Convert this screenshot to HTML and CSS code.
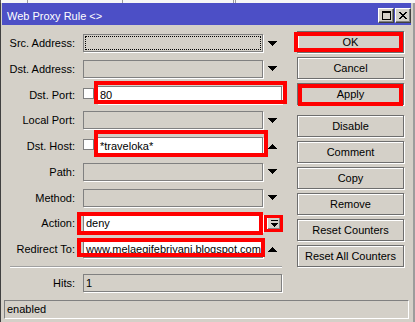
FILE: index.html
```html
<!DOCTYPE html>
<html lang="en">
<head>
  <meta charset="UTF-8" />
  <meta name="viewport" content="width=device-width, initial-scale=1" />
  <title>Web Proxy Rule</title>
  <link rel="stylesheet" href="styles.css">
</head>
<body>
  <div class="backdrop"></div>
  <div class="window">
    <header class="titlebar">
      <span class="title">Web Proxy Rule &lt;&gt;</span>
      <div class="title-buttons">
        <button class="tbtn" type="button" aria-label="Maximize">
          <svg width="9" height="9" viewBox="0 0 9 9"><path d="M0 0h9v2H0z M0 2h1v7H0z M8 2h1v7H8z M0 8h9v1H0z"/></svg>
        </button>
        <button class="tbtn" type="button" aria-label="Close">
          <svg width="8" height="7" viewBox="0 0 8 7"><path d="M0 0h2v1H0z M6 0h2v1H6z M1 1h2v1H1z M5 1h2v1H5z M2 2h4v1H2z M3 3h2v1H3z M2 4h4v1H2z M1 5h2v1H1z M5 5h2v1H5z M0 6h2v1H0z M6 6h2v1H6z"/></svg>
        </button>
      </div>
    </header>

    <div class="content">
      <div class="form">
        <div class="row">
          <span class="label">Src. Address:</span>
          <div class="field focus"></div>
          <span class="arrow"><svg width="9" height="5" viewBox="0 0 9 5"><path d="M0 0h9v1H0z M1 1h7v1H1z M2 2h5v1H2z M3 3h3v1H3z M4 4h1v1H4z"/></svg></span>
        </div>
        <div class="row">
          <span class="label">Dst. Address:</span>
          <div class="field"></div>
          <span class="arrow"><svg width="9" height="5" viewBox="0 0 9 5"><path d="M0 0h9v1H0z M1 1h7v1H1z M2 2h5v1H2z M3 3h3v1H3z M4 4h1v1H4z"/></svg></span>
        </div>
        <div class="row">
          <span class="label">Dst. Port:</span>
          <span class="check"></span>
          <div class="field field-white field-port mark mark-port">80</div>
        </div>
        <div class="row">
          <span class="label">Local Port:</span>
          <div class="field"></div>
          <span class="arrow"><svg width="9" height="5" viewBox="0 0 9 5"><path d="M0 0h9v1H0z M1 1h7v1H1z M2 2h5v1H2z M3 3h3v1H3z M4 4h1v1H4z"/></svg></span>
        </div>
        <div class="row">
          <span class="label">Dst. Host:</span>
          <span class="check"></span>
          <div class="field field-white field-host mark mark-host">*traveloka*</div>
          <span class="arrow"><svg width="9" height="5" viewBox="0 0 9 5"><path d="M4 0h1v1H4z M3 1h3v1H3z M2 2h5v1H2z M1 3h7v1H1z M0 4h9v1H0z"/></svg></span>
        </div>
        <div class="row">
          <span class="label">Path:</span>
          <div class="field"></div>
          <span class="arrow"><svg width="9" height="5" viewBox="0 0 9 5"><path d="M0 0h9v1H0z M1 1h7v1H1z M2 2h5v1H2z M3 3h3v1H3z M4 4h1v1H4z"/></svg></span>
        </div>
        <div class="row">
          <span class="label">Method:</span>
          <div class="field"></div>
          <span class="arrow"><svg width="9" height="5" viewBox="0 0 9 5"><path d="M0 0h9v1H0z M1 1h7v1H1z M2 2h5v1H2z M3 3h3v1H3z M4 4h1v1H4z"/></svg></span>
        </div>
        <div class="row">
          <span class="label">Action:</span>
          <div class="field field-white mark mark-action">deny</div>
          <button class="abtn mark mark-abtn" type="button" aria-label="Choose">
            <svg width="7" height="7" viewBox="0 0 7 7"><path d="M0 0h7v1H0z M0 3h7v1H0z M1 4h5v1H1z M2 5h3v1H2z M3 6h1v1H3z"/></svg>
          </button>
        </div>
        <div class="row">
          <span class="label">Redirect To:</span>
          <div class="field field-white mark mark-redirect">www.melaegifebriyani.blogspot.com</div>
          <span class="arrow"><svg width="9" height="5" viewBox="0 0 9 5"><path d="M4 0h1v1H4z M3 1h3v1H3z M2 2h5v1H2z M1 3h7v1H1z M0 4h9v1H0z"/></svg></span>
        </div>
        <div class="sep"></div>
        <div class="row">
          <span class="label">Hits:</span>
          <div class="field field-wide">1</div>
        </div>
      </div>

      <div class="buttons">
        <button class="btn mark mark-ok" type="button">OK</button>
        <button class="btn" type="button">Cancel</button>
        <button class="btn mark mark-apply" type="button">Apply</button>
        <button class="btn btn-gap" type="button">Disable</button>
        <button class="btn" type="button">Comment</button>
        <button class="btn" type="button">Copy</button>
        <button class="btn" type="button">Remove</button>
        <button class="btn" type="button">Reset Counters</button>
        <button class="btn" type="button">Reset All Counters</button>
      </div>
    </div>

    <div class="status">enabled</div>
  </div>
</body>
</html>
```

FILE: styles.css
```css
* {
  box-sizing: border-box;
}

body {
  margin: 0;
  width: 415px;
  height: 322px;
  overflow: hidden;
  background: #d4d0c8;
  font-family: "Liberation Sans", Arial, sans-serif;
  font-size: 11px;
  color: #000;
}

/* window behind the dialog */
.backdrop {
  height: 3px;
  background-color: #f6f6f6;
  background-image: linear-gradient(to right,
    #555 0 1px, transparent 1px 27px,
    #9a9a9a 27px 28px, transparent 28px 122px,
    #9a9a9a 122px 123px, transparent 123px 233px,
    #9a9a9a 233px 234px, transparent 234px 235px,
    #9a9a9a 235px 236px, transparent 236px);
}

.window {
  height: 319px;
  border-left: 1px solid #404040;
  border-right: 2px solid #9c9c9c;
  display: flex;
  flex-direction: column;
}

.titlebar {
  height: 22px;
  margin: 0 2px 0 1px;
  padding: 0 0 0 5px;
  background: #4c4fc6;
  color: #fff;
  display: flex;
  justify-content: space-between;
  align-items: flex-start;
}

.title {
  margin-top: 7px;
  line-height: 13px;
}

.title-buttons {
  display: flex;
  gap: 1px;
  margin-top: 5px;
}

.tbtn {
  width: 16px;
  height: 15px;
  padding: 0;
  display: flex;
  align-items: center;
  justify-content: center;
  background: #d4d0c8;
  border: 1px solid;
  border-color: #fff #404040 #404040 #fff;
  box-shadow: inset -1px -1px #808080;
}

.tbtn svg,
.arrow svg,
.abtn svg {
  display: block;
}

.content {
  height: 275px;
  display: flex;
}

.form {
  width: 282px;
  padding-top: 9px;
  display: flex;
  flex-direction: column;
  gap: 7.75px;
}

.row {
  height: 18px;
  display: flex;
  align-items: center;
}

.label {
  width: 74px;
  margin-right: 8px;
  text-align: right;
  white-space: nowrap;
  line-height: 18px;
}

.field {
  width: 180px;
  height: 18px;
  padding: 0 2px;
  line-height: 16px;
  white-space: nowrap;
  background: #d4d0c8;
  border: 1px solid #808080;
  box-shadow: 1px 1px 0 #fff;
}

.field-white {
  background: #fff;
}

.field-wide {
  width: 199px;
}

.field-port {
  width: 185px;
}

.field-host {
  width: 166px;
}

.field.focus {
  outline: 1px dotted #000;
  outline-offset: -3px;
}

.check {
  width: 11px;
  height: 11px;
  margin-right: 3px;
  align-self: flex-start;
  margin-top: 2px;
  background: #fff;
  border: 1px solid #808080;
}

.arrow {
  width: 20px;
  padding-left: 5px;
  display: flex;
  align-items: center;
}

.abtn {
  width: 14px;
  height: 14px;
  margin-left: 4px;
  padding: 0;
  display: flex;
  align-items: center;
  justify-content: center;
  background: #d4d0c8;
  border: 1px solid;
  border-color: #fff #404040 #404040 #fff;
  box-shadow: inset -1px -1px #808080;
}

.sep {
  width: 272px;
  height: 2px;
  margin: 0 0 -1.5px 9px;
  border-top: 1px solid #a0a0a0;
  border-bottom: 1px solid #fff;
}

.buttons {
  width: 107px;
  margin-left: 14px;
  padding-top: 6px;
  display: flex;
  flex-direction: column;
  gap: 4px;
}

.btn {
  width: 107px;
  height: 22px;
  padding: 0;
  font: inherit;
  color: #000;
  line-height: 20px;
  background: #d4d0c8;
  border: 1px solid #6e6e6e;
  box-shadow: inset 1px 1px #fff, 1px 1px #fff;
}

.btn-gap {
  margin-top: 6px;
}

.status {
  height: 19px;
  margin: 0 4px 0 3px;
  padding-left: 2px;
  line-height: 17px;
  border: 1px solid;
  border-color: #808080 #fff #fff #808080;
}

/* red annotation boxes drawn over the screenshot */
.mark {
  position: relative;
}

.mark::after {
  content: "";
  position: absolute;
  border: 4px solid #f00;
}

.mark-ok::after { inset: 0 0 0 -4px; }
.mark-apply::after { inset: 0 0 -2px 0; }
.mark-port::after { inset: -6px -6px -1px -4px; }
.mark-host::after { inset: -8px -6px -3px -4px; }
.mark-action::after { inset: -3px -1px -4px -7px; }
.mark-redirect::after { inset: -3px -3px 0 -7px; }
.mark-abtn::after {
  inset: -2px -3px -3px -4px;
  border-width: 3px;
}
```
